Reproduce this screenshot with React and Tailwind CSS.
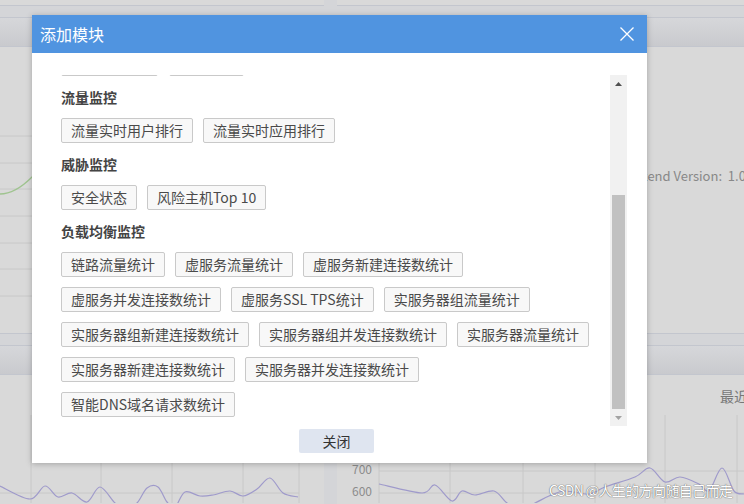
import React from "react";

const sections = [
  { title: "流量监控", items: ["流量实时用户排行", "流量实时应用排行"] },
  { title: "威胁监控", items: ["安全状态", "风险主机Top 10"] },
  {
    title: "负载均衡监控",
    items: [
      "链路流量统计",
      "虚服务流量统计",
      "虚服务新建连接数统计",
      "虚服务并发连接数统计",
      "虚服务SSL TPS统计",
      "实服务器组流量统计",
      "实服务器组新建连接数统计",
      "实服务器组并发连接数统计",
      "实服务器流量统计",
      "实服务器新建连接数统计",
      "实服务器并发连接数统计",
      "智能DNS域名请求数统计",
    ],
  },
];

// catmull-rom -> bezier so the chart lines look smooth
function smooth(pts) {
  let d = `M${pts[0][0]} ${pts[0][1]}`;
  for (let i = 0; i < pts.length - 1; i++) {
    const p0 = pts[i - 1] || pts[i];
    const p1 = pts[i];
    const p2 = pts[i + 1];
    const p3 = pts[i + 2] || p2;
    const c1x = p1[0] + (p2[0] - p0[0]) / 6;
    const c1y = p1[1] + (p2[1] - p0[1]) / 6;
    const c2x = p2[0] - (p3[0] - p1[0]) / 6;
    const c2y = p2[1] - (p3[1] - p1[1]) / 6;
    d += ` C${c1x} ${c1y} ${c2x} ${c2y} ${p2[0]} ${p2[1]}`;
  }
  return d;
}

const leftLine = [
  [0, 111], [30, 124], [45, 111], [58, 122], [72, 118], [87, 127], [100, 112],
  [115, 128], [125, 134], [137, 128], [147, 113], [158, 112], [167, 127],
  [175, 132], [185, 117], [200, 121], [213, 120], [230, 116], [243, 121],
  [257, 114], [270, 103], [283, 118], [298, 122],
];

const rightLine = [
  [42, 109], [85, 118], [98, 110], [115, 126], [125, 116], [138, 120],
  [157, 116], [170, 128], [183, 134], [198, 128], [212, 121], [228, 116],
  [252, 119], [268, 112], [298, 102], [313, 93], [328, 107], [343, 102],
  [362, 109], [372, 116], [385, 93], [397, 116], [407, 119],
];

function PanelHead() {
  return (
    <div className="h-[29px] border-b border-[#c3c6ce] bg-gradient-to-b from-[#d6d7da] to-[#c9cace]" />
  );
}

function Chip({ children, className = "" }) {
  return (
    <div
      className={`h-[25px] px-[9px] flex items-center whitespace-nowrap border border-[#c9c9c9] bg-[#f8f8f8] rounded-[2px] text-[14px] text-[#4a4a4a] ${className}`}
    >
      {children}
    </div>
  );
}

function Scrollbar() {
  return (
    <div className="w-[17px] h-full bg-[#f1f1f1] flex flex-col">
      <div className="h-[17px] flex items-center justify-center">
        <svg width="7" height="4" viewBox="0 0 7 4">
          <path d="M0 4L3.5 0L7 4Z" fill="#505050" />
        </svg>
      </div>
      <div className="flex-1 flex justify-center">
        <div className="mt-[103px] w-[13px] h-[214px] bg-[#c1c1c1]" />
      </div>
      <div className="h-[17px] flex items-center justify-center">
        <svg width="7" height="4" viewBox="0 0 7 4">
          <path d="M0 0L3.5 4L7 0Z" fill="#a3a3a3" />
        </svg>
      </div>
    </div>
  );
}

function AddModuleDialog() {
  return (
    <div className="absolute left-[32px] top-[15px] w-[615px] h-[448px] bg-white shadow-[0_1px_6px_rgba(0,0,0,0.25)] flex flex-col">
      <div className="h-[38px] bg-[#5094e0] flex items-center justify-between pl-[8px] pr-[13px]">
        <span className="text-[16px] text-white">添加模块</span>
        <svg width="14" height="14" viewBox="0 0 14 14">
          <path d="M0.5 0.5L13.5 13.5M13.5 0.5L0.5 13.5" stroke="#fff" strokeWidth="1.3" />
        </svg>
      </div>

      <div className="pt-[22px]">
        <div className="h-[351px] ml-[29px] mr-[20px] flex">
          <div className="flex-1 h-full overflow-hidden">
            <div className="w-[540px] -mt-[24px]">
              {/* previous row, scrolled out of view */}
              <div className="flex gap-x-[11px]">
                <Chip className="w-[97px]">接口流量</Chip>
                <Chip className="w-[75px]">会话</Chip>
              </div>
              {sections.map((s) => (
                <div key={s.title}>
                  <div className="h-[42px] flex items-center text-[14px] font-bold text-[#444]">
                    {s.title}
                  </div>
                  <div className="flex flex-wrap gap-x-[10px] gap-y-[10px]">
                    {s.items.map((it) => (
                      <Chip key={it}>{it}</Chip>
                    ))}
                  </div>
                </div>
              ))}
            </div>
          </div>
          <Scrollbar />
        </div>
        <div className="mt-[3px] flex justify-center pr-[6px]">
          <button className="w-[75px] h-[24px] bg-[#dfe5f0] rounded-[2px] text-[14px] text-[#333]">
            关闭
          </button>
        </div>
      </div>
    </div>
  );
}

export default function App() {
  return (
    <div className="relative w-[744px] h-[504px] overflow-hidden bg-[#d4d5d8] font-['Noto_Sans_CJK_SC','Microsoft_YaHei',sans-serif]">
      {/* dimmed dashboard behind the modal */}
      <div className="grid grid-cols-[324px_407px] gap-x-[13px] h-[6px]">
        <div className="bg-[#d9d9d9] border-b border-[#c3c6ce]" />
        <div className="bg-[#d9d9d9] border-b border-[#c3c6ce]" />
      </div>

      <div className="mt-[11px] grid grid-cols-[324px_407px] gap-x-[13px]">
        <div className="h-[317px] border-y border-[#c3c6ce] bg-[#d9d9d9]">
          <PanelHead />
          <svg width="324" height="285" className="block">
            {[89, 116, 142, 169, 196, 222, 249].map((y) => (
              <line key={y} x1="0" x2="324" y1={y} y2={y} stroke="#c8c8c8" />
            ))}
            <path d="M0 147 C12 147 22 140 32 130 C50 110 70 95 100 90 C140 84 180 80 240 70" fill="none" stroke="#9fc48f" strokeWidth="1.3" />
          </svg>
        </div>
        <div className="h-[317px] border-y border-[#c3c6ce] bg-[#d9d9d9]">
          <PanelHead />
          <div className="pl-[281px] pt-[119px] text-[13px] leading-[20px] text-[#888] whitespace-nowrap">
            Backend Version:&nbsp;&nbsp;1.09
          </div>
        </div>
      </div>

      <div className="mt-[11px] grid grid-cols-[324px_407px] gap-x-[13px]">
        <div className="h-[200px] border-t border-[#c3c6ce] bg-[#d9d9d9]">
          <PanelHead />
          <svg width="324" height="128" className="block">
            <line x1="0" x2="299" y1="118" y2="118" stroke="#c8c8c8" />
            {[31, 101, 172, 243, 299].map((x) => (
              <line key={x} x1={x} x2={x} y1="40" y2="128" stroke="#c8c8c8" />
            ))}
            <path d={smooth(leftLine)} fill="none" stroke="#9f9acb" strokeWidth="1.2" />
          </svg>
        </div>
        <div className="relative h-[200px] border-t border-[#c3c6ce] bg-[#d9d9d9]">
          <PanelHead />
          <div className="relative h-[128px]">
            <svg width="407" height="128" className="absolute inset-0">
              {[96, 118].map((y) => (
                <line key={y} x1="42" x2="407" y1={y} y2={y} stroke="#c8c8c8" />
              ))}
              {[42, 113, 186, 258, 328, 400].map((x) => (
                <line key={x} x1={x} x2={x} y1="40" y2="128" stroke="#c8c8c8" />
              ))}
              <path d={smooth(rightLine)} fill="none" stroke="#9f9acb" strokeWidth="1.2" />
              <text x="35" y="99" textAnchor="end" fontSize="12" fill="#8c8c8c">700</text>
              <text x="35" y="121" textAnchor="end" fontSize="12" fill="#8c8c8c">600</text>
            </svg>
            <div className="relative pl-[383px] pt-[11px] text-[14px] leading-[20px] text-[#777] whitespace-nowrap">
              最近1小时
            </div>
          </div>
        </div>
      </div>

      <AddModuleDialog />

      <div className="absolute left-[549px] top-[480px] text-[14px] leading-[20px] tracking-[-0.6px] text-white whitespace-nowrap [text-shadow:0_0_1px_#666,0_0_1px_#666]">
        CSDN @人生的方向随自己而走
      </div>
    </div>
  );
}
